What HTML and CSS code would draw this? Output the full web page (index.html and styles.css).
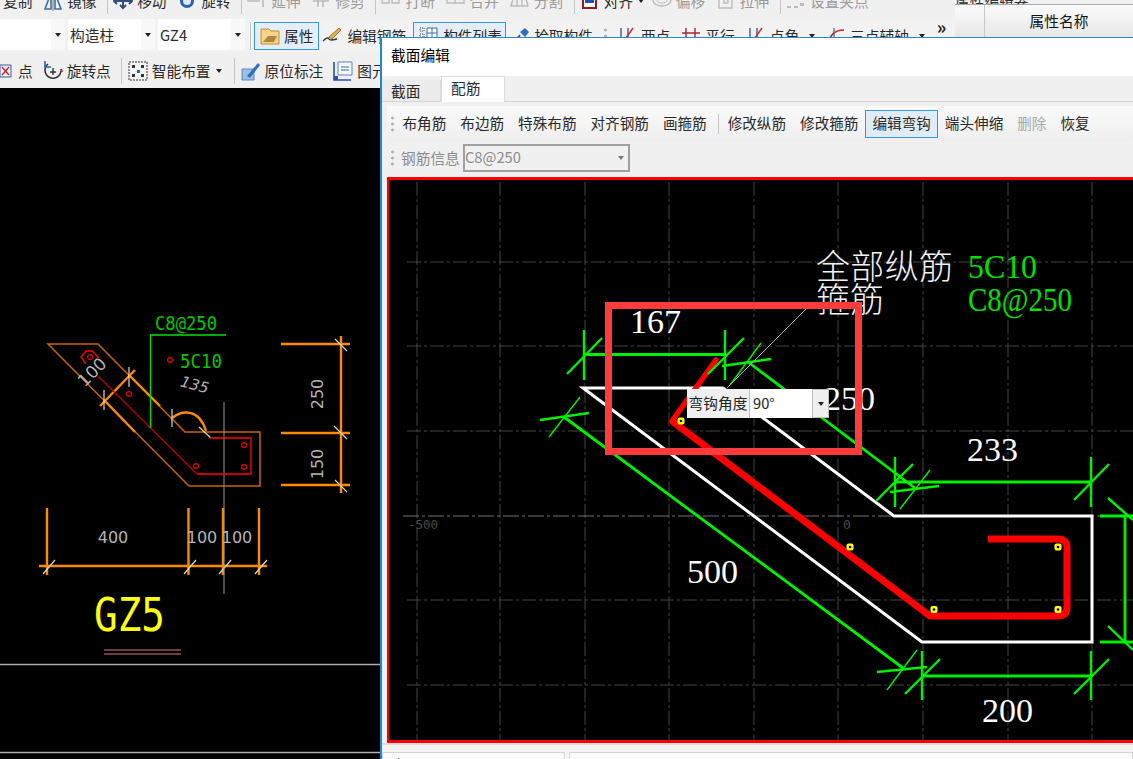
FILE: index.html
```html
<!DOCTYPE html>
<html lang="zh">
<head>
<meta charset="utf-8">
<title>截面编辑</title>
<link rel="stylesheet" href="styles.css">
</head>
<body>
<div class="stage">
  <div class="top">
    <div class="bars">
      <div class="row row0">
        <div class="tool"><span>复制</span></div>
        <div class="tool"><svg class="ic" viewBox="0 0 20 20"><path d="M8 2 2 18H8ZM12 2l6 16h-6Z" fill="none" stroke="#3f6f9f" stroke-width="1.6"/><path d="M10 0v20" stroke="#777"/></svg><span>镜像</span></div>
        <i class="sep"></i>
        <div class="tool"><svg class="ic" viewBox="0 -9 20 20"><path d="M10 -8V8M2 1h16M7 5l3 3 3-3M4 -2 1 1l3 3M16 -2l3 3-3 3" fill="none" stroke="#2f4f7f" stroke-width="2"/></svg><span>移动</span></div>
        <div class="tool"><svg class="ic" viewBox="0 -9 20 20"><circle cx="10" cy="1" r="5.500" fill="#dfe8f6" stroke="#2a62b8" stroke-width="3"/></svg><span>旋转</span></div>
        <i class="sep"></i>
        <div class="tool off"><svg class="ic" viewBox="0 -9 20 20"><path d="M0 1h13M0 -3h13M16 -6V7" fill="none" stroke="#bbb" stroke-width="1.6"/></svg><span>延伸</span></div>
        <div class="tool off"><svg class="ic" viewBox="0 -9 20 20"><path d="M2 1h16M7 -6V7M12 -6V7" fill="none" stroke="#bbb" stroke-width="1.6"/></svg><span>修剪</span></div>
        <i class="sep"></i>
        <div class="tool off"><svg class="ic" viewBox="0 -9 20 20"><path d="M1 -1h7v4H1ZM11 -1h7v4h-7Z" fill="none" stroke="#bbb" stroke-width="1.4"/></svg><span>打断</span></div>
        <div class="tool off"><svg class="ic" viewBox="0 -9 20 20"><path d="M1 -1h17v4H1ZM9 -1v4" fill="none" stroke="#bbb" stroke-width="1.4"/></svg><span>合并</span></div>
        <div class="tool off"><svg class="ic" viewBox="0 -9 20 20"><path d="M4 -5 1 6h17l-3-11M7 -5V6M12 -5V6" fill="none" stroke="#bbb" stroke-width="1.4"/></svg><span>分割</span></div>
        <i class="sep"></i>
        <div class="tool"><svg class="ic" viewBox="0 -9 20 20"><path d="M3 -6h13V8H3Z" fill="#fff" stroke="#8a1c2c" stroke-width="2"/><path d="M5 -2h9v5H5Z" fill="#1f4fb0"/></svg><span>对齐</span><b class="drop"></b></div>
        <div class="tool off"><svg class="ic" viewBox="0 -9 20 20"><ellipse cx="10" cy="0" rx="9" ry="6" fill="none" stroke="#bbb" stroke-width="1.4"/><ellipse cx="10" cy="0" rx="5" ry="3" fill="none" stroke="#bbb"/></svg><span>偏移</span></div>
        <div class="tool off"><svg class="ic" viewBox="0 -9 20 20"><path d="M3 -6V8h13V-6M8 -1h4v4H8Z" fill="none" stroke="#bbb" stroke-width="1.4"/></svg><span>拉伸</span></div>
        <i class="sep"></i>
        <div class="tool off"><svg class="ic" viewBox="0 -9 20 20"><path d="M1 7h4M8 7h4M16 -5l-5 5" fill="none" stroke="#aaa" stroke-width="1.6"/><path d="M14 3h4v3h-4Z" fill="#bbb"/></svg><span>设置夹点</span></div>
      </div>
      <div class="row row1">
        <div class="combo combo-a"><span></span><b class="arrow"></b></div>
        <div class="combo combo-b"><span>构造柱</span><b class="arrow"></b></div>
        <div class="combo combo-b"><span>GZ4</span><b class="arrow"></b></div>
        <i class="sep sep-tall"></i>
        <div class="tool btn-on"><svg class="ic" viewBox="0 0 20 20"><path d="M1 3h8l2 2h8v13H1Z" fill="#f6d58a" stroke="#c98a2a"/><path d="M3 16l5-6h9l-3 6Z" fill="#a88a3a"/></svg><span>属性</span></div>
        <div class="tool t-edit"><svg class="ic" viewBox="0 0 20 20"><path d="M1 15c3-3 5-4 6-2s4 1 8 0" fill="none" stroke="#333" stroke-width="1.4"/><path d="M7 11 17 2l2 2-9 9Z" fill="#e9b04a" stroke="#8a5a1a" stroke-width=".8"/></svg><span>编辑钢筋</span></div>
        <div class="tool btn-on t-list"><svg class="ic" viewBox="0 0 20 20"><path d="M1 2h4v3H1ZM1 8h4v3H1ZM1 14h4v3H1Z" fill="#fff" stroke="#333" stroke-dasharray="1 1"/><path d="M8 2h10v15H8ZM8 7h10M8 12h10M13 2v15" fill="#fff" stroke="#3a6ea5"/></svg><span>构件列表</span></div>
        <div class="tool t-pick"><svg class="ic" viewBox="0 0 20 20"><path d="M14 2l4 4-4 5-5-5Z" fill="#2f6fc0"/><path d="M9 9l-6 8" stroke="#555" stroke-width="2"/></svg><span>拾取构件</span></div>
        <i class="grip grip-a"></i>
        <div class="tool t-axis"><svg class="ic" viewBox="0 0 20 20"><path d="M4 2v16M11 2v16M1 13h16" fill="none" stroke="#3a5f95" stroke-width="1.4"/><path d="M6 16 16 2" stroke="#d22" stroke-width="1.4"/></svg><span>两点</span></div>
        <div class="tool t-axis"><svg class="ic" viewBox="0 0 20 20"><path d="M5 2v16M14 2v16M1 7h18M1 12h18" fill="none" stroke="#a02a3a" stroke-width="1.4"/></svg><span>平行</span></div>
        <div class="tool t-axis"><svg class="ic" viewBox="0 0 20 20"><path d="M4 2v16M11 2v16M1 13h16" fill="none" stroke="#3a5f95" stroke-width="1.4"/><path d="M6 16 16 2" stroke="#d22" stroke-width="1.4"/></svg><span>点角</span><b class="drop drop-far"></b></div>
        <div class="tool t-axis"><svg class="ic" viewBox="0 0 20 20"><path d="M3 18C3 9 9 4 18 4" fill="none" stroke="#c22" stroke-width="1.6"/><path d="M1 13h12M8 2v16" fill="none" stroke="#3a5f95" stroke-width="1.2"/></svg><span>三点辅轴</span><b class="drop drop-far"></b></div>
        <span class="more">»</span>
      </div>
      <div class="row row2">
        <div class="tool t-first"><svg class="ic" viewBox="0 0 20 20"><path d="M6 4h11v12H6Z" fill="#eef" stroke="#3a5f95"/><path d="M8 6l7 8M15 6l-7 8" stroke="#c22" stroke-width="1.4"/></svg><span>点</span></div>
        <div class="tool"><svg class="ic" viewBox="0 0 20 20"><path d="M5 3a8 8 0 1 0 13 7" fill="none" stroke="#333" stroke-width="1.6"/><path d="M2 0v6h6" fill="none" stroke="#2a62b8" stroke-width="1.6"/><path d="M10 7v7M7 11h6" stroke="#333" stroke-width="1.4"/><path d="M18 8l1 3" stroke="#c22" stroke-width="2"/></svg><span>旋转点</span></div>
        <i class="sep sep-r"></i>
        <div class="tool"><svg class="ic" viewBox="0 0 20 20"><path d="M1 1h18v18H1Z" fill="#f4f4f4" stroke="#333" stroke-dasharray="2 1"/><path d="M4 4h3v3H4ZM13 4h3v3h-3ZM4 13h3v3H4ZM13 13h3v3h-3Z" fill="#333"/><path d="M9 9h3v3H9Z" fill="#2a62b8"/></svg><span>智能布置</span><b class="drop"></b></div>
        <i class="sep sep-r"></i>
        <div class="tool"><svg class="ic" viewBox="0 0 20 20"><path d="M1 8h12v11H1Z" fill="#9cc0e8" stroke="#5a86b8"/><path d="M6 15 17 2l2 2L9 17Z" fill="#2f6fc0"/></svg><span>原位标注</span></div>
        <div class="tool"><svg class="ic" viewBox="0 0 20 20"><path d="M5 1h14v13H5Z" fill="#f4f8ff" stroke="#5a86b8"/><path d="M8 6h8M8 9h8" stroke="#3a6ea5"/><path d="M1 1v18h17" fill="none" stroke="#2a52a8" stroke-width="1.6"/><path d="M1 15h4v4H1Z" fill="#2a52a8"/></svg><span>图元</span></div>
      </div>
    </div>
    <div class="prop">
      <div class="prop-title">属性编辑器</div>
      <div class="prop-head"><div class="prop-idx"></div><div class="prop-name">属性名称</div></div>
    </div>
  </div>

  <div class="cad">
    <svg class="cad-svg" viewBox="0 88 380 671">
      <path class="o-thin" d="M48 344H98L185 432H260V486H189Z"/>
      <path class="o-thick" d="M100 406 135 370M129 375 160 406M104 400 135 432M281 344H350M281 433H350M281 485H350M341 336V493M39 566H267M47 508V575M188.500 508V575M223 508V575M259 508V575"/>
      <path class="o-arc" d="M172 418C182 410 199 408 206 431"/>
      <path class="w-thin" d="M104 390V410M129 367V387M172 409V427M199 427 211 438M335 339 347 351M334 426 347 439M335 480 347 492M43 574 55 560M184 574 196 560M219 574 231 560M255 574 267 560"/>
      <path class="w-line" d="M224 402V594"/>
      <path class="r-thin" d="M210 438H251V474H197"/>
      <path class="r-dark" d="M197 474 98 376"/>
      <path class="r-thin" d="M99 358 92 351H86L81 357 86 364"/>
      <g class="r-dots">
        <circle cx="90" cy="357" r="2.400"/><circle cx="129" cy="394" r="2.400"/><circle cx="170" cy="360" r="2.400"/><circle cx="196" cy="466" r="2.400"/><circle cx="244" cy="445" r="2.400"/><circle cx="244" cy="467" r="2.400"/>
      </g>
      <path class="g-thin" d="M150.500 428V335H226"/>
      <text class="t-green" x="155" y="330" textLength="62" lengthAdjust="spacingAndGlyphs">C8@250</text>
      <text class="t-green" x="180" y="368" textLength="42" lengthAdjust="spacingAndGlyphs">5C10</text>
      <text class="t-gray t-it" x="195" y="390" text-anchor="middle" transform="rotate(15 195 384)">135</text>
      <text class="t-gray t-big" x="92" y="378" text-anchor="middle" transform="rotate(-45 92 372)">100</text>
      <text class="t-gray" x="317" y="394" text-anchor="middle" dominant-baseline="central" transform="rotate(-90 317 394)">250</text>
      <text class="t-gray" x="317" y="464" text-anchor="middle" dominant-baseline="central" transform="rotate(-90 317 464)">150</text>
      <text class="t-gray" x="113" y="543" text-anchor="middle">400</text>
      <text class="t-gray" x="202" y="543" text-anchor="middle">100</text>
      <text class="t-gray" x="237" y="543" text-anchor="middle">100</text>
      <text class="t-yellow" x="94" y="631" textLength="71" lengthAdjust="spacingAndGlyphs">GZ5</text>
      <path class="pink" d="M104 650H181M104 654H181"/>
      <path class="w-rule" d="M0 664.500H380M0 752.500H380"/>
    </svg>
  </div>

  <div class="dialog">
    <div class="dlg-title">截面编辑</div>
    <div class="tabs">
      <div class="tab">截面</div>
      <div class="tab tab-on">配筋</div>
    </div>
    <div class="dlg-bar bar-a">
      <i class="grip"></i>
      <span class="cmd">布角筋</span>
      <span class="cmd">布边筋</span>
      <span class="cmd">特殊布筋</span>
      <span class="cmd">对齐钢筋</span>
      <span class="cmd">画箍筋</span>
      <i class="sep sep-cmd"></i>
      <span class="cmd">修改纵筋</span>
      <span class="cmd">修改箍筋</span>
      <span class="cmd cmd-on">编辑弯钩</span>
      <span class="cmd">端头伸缩</span>
      <span class="cmd cmd-off">删除</span>
      <span class="cmd">恢复</span>
    </div>
    <div class="dlg-bar bar-b">
      <i class="grip"></i>
      <span class="info-label">钢筋信息</span>
      <div class="info-combo"><span class="info-val">C8@250</span><b class="arrow arrow-gray"></b></div>
    </div>
    <div class="canvas">
      <svg class="canvas-svg" viewBox="389 180 744 560">
        <path class="grid" d="M417 182V740M500 182V740M585 182V740M669 182V740M754 182V740M838 182V740M923 182V740M1008 182V740M1092 182V740M407 262H1133M407 346H1133M407 431H1133M407 600H1133M407 685H1133"/>
        <path class="axis" d="M403 516H1133"/>
        <text class="t-axis-label" x="408" y="529" textLength="30" lengthAdjust="spacingAndGlyphs">-500</text>
        <text class="t-axis-label" x="843" y="529">0</text>
        <path class="outline" d="M583 388H723L894 516H1092V642H922Z"/>
        <path class="rebar" d="M988 539H1058Q1067 539 1067 548V607Q1067 616 1058 616H930L672 421"/>
        <path class="rebar-hook" d="M672 421 716 360"/>
        <path class="dim" d="M584 354.500H725M895 482H1091M922 676H1091M1125 516V642M1100 516H1133M1100 642H1133M564 417 903 668M748 362 915 488"/>
        <path class="dim-t" d="M584 330V380M725 330V380M567 374 602 338M708 374 744 338M895 457V507M1091 457V507M876 501 913 464M1074 500 1109 464M922 651V700M1091 651V700M905 694 940 659M1074 694 1109 659M1108 498 1133 520M1108 626 1133 650M540 420 589 413M722 366 771 359M877 672 927 667M890 492 939 486"/>
        <path class="dim-s" d="M549 437 580 397M730 385 761 343M887 690 917 650M900 509 930 470"/>
        <path class="leader" d="M727 388 807 308"/>
        <g class="nodes">
          <rect x="677.500" y="417.500" width="7" height="7" rx="2"/><rect x="846.500" y="543.500" width="7" height="7" rx="2"/><rect x="930.500" y="606" width="7" height="7" rx="2"/><rect x="1054.500" y="543.500" width="7" height="7" rx="2"/><rect x="1054.500" y="606" width="7" height="7" rx="2"/>
        </g>
        <g class="node-c">
          <circle cx="681" cy="421" r="1.300"/><circle cx="850" cy="547" r="1.300"/><circle cx="934" cy="609.500" r="1.300"/><circle cx="1058" cy="547" r="1.300"/><circle cx="1058" cy="609.500" r="1.300"/>
        </g>
        <text class="t-num" x="630" y="333">167</text>
        <text class="t-num" x="824" y="410">250</text>
        <text class="t-num" x="967" y="461">233</text>
        <text class="t-num" x="687" y="583">500</text>
        <text class="t-num" x="982" y="722">200</text>
        <text class="t-cn" x="816" y="279" textLength="137">全部纵筋</text>
        <text class="t-cn" x="816" y="312" textLength="68">箍筋</text>
        <text class="t-num t-gr" x="968" y="278" textLength="69" lengthAdjust="spacingAndGlyphs">5C10</text>
        <text class="t-num t-gr" x="968" y="311" textLength="104" lengthAdjust="spacingAndGlyphs">C8@250</text>
      </svg>
      <div class="hook-pop">
        <span class="hook-label">弯钩角度</span>
        <span class="hook-val">90°</span>
        <span class="hook-btn"><b class="arrow"></b></span>
      </div>
      <div class="callout"></div>
    </div>
    <div class="dlg-foot">
      <div class="pane pane-a">(</div>
      <div class="pane pane-b"></div>
    </div>
  </div>
</div>
</body>
</html>
```
FILE: styles.css
```css
html, body {
  margin: 0;
  padding: 0;
  height: 100%;
  overflow: hidden;
  background: #000;
}
.stage {
  position: relative;
  width: 1133px;
  height: 759px;
  display: flex;
  flex-direction: column;
  overflow: hidden;
  font-family: "Noto Sans CJK SC", "Noto Sans", sans-serif;
  font-size: 14.7px;
  color: #2a2a2a;
}
.top {
  display: flex;
  height: 88px;
  flex: none;
  background: #f0f0f0;
}
.bars {
  width: 955px;
  flex: none;
}
.row {
  display: flex;
  white-space: nowrap;
  overflow: hidden;
}
.row0 {
  height: 19px;
  padding-left: 3px;
  align-items: flex-start;
}
.row0 .tool {
  margin-top: -9px;
  margin-right: 10.700px;
}
.row1 {
  height: 33px;
  align-items: center;
  background: #f2f2f2;
}
.row2 {
  height: 36px;
  align-items: center;
  padding-top: 2px;
  box-sizing: border-box;
}
.tool {
  display: flex;
  align-items: center;
  gap: 4px;
  height: 20px;
  line-height: 20px;
  margin-right: 11px;
  flex: none;
}
.row2 .tool {
  margin-right: 10px;
}
.tool.off {
  color: #9a9a9a;
}
.ic {
  width: 20px;
  height: 20px;
  flex: none;
}
.sep {
  width: 1px;
  height: 20px;
  background: #c4c4c4;
  margin-right: 5px;
  margin-top: -6px;
  flex: none;
}
.row1 .sep-tall, .sep-r {
  margin-top: 0;
}
.sep-tall {
  height: 28px;
  margin-left: 2px;
  margin-right: 3px;
}
.sep-r {
  height: 26px;
  margin-right: 6px;
}
.drop {
  display: block;
  width: 0;
  height: 0;
  border-left: 3.5px solid transparent;
  border-right: 3.5px solid transparent;
  border-top: 4px solid #222;
  margin-left: 1px;
  margin-right: -3px;
}
.row2 .drop {
  margin-right: 2px;
}
.drop-far {
  margin-left: 6px;
  margin-right: 0;
}
.combo {
  display: flex;
  align-items: center;
  justify-content: space-between;
  height: 31px;
  background: #fff;
  margin-right: 3px;
  margin-top: -2px;
  box-sizing: border-box;
  flex: none;
}
.combo span {
  padding-left: 2px;
}
.combo-a {
  width: 65px;
}
.combo-b {
  width: 87px;
}
.arrow {
  display: flex;
  width: 14px;
  align-self: stretch;
  background: #f8f8f8;
}
.arrow::after {
  content: "";
  margin: auto;
  border-left: 3.5px solid transparent;
  border-right: 3.5px solid transparent;
  border-top: 4px solid #222;
}
.arrow-gray {
  background: transparent;
}
.arrow-gray::after {
  border-top-color: #777;
}
.btn-on {
  height: 28px;
  padding: 0 5px;
  margin: 0 3px 0 0;
  border: 1px solid #3a96dd;
  background: #e3eef9;
  box-sizing: border-box;
}
.row1 .t-edit {
  margin-right: 7px;
  gap: 5px;
}
.row1 .t-list {
  width: 93px;
  margin-right: 5px;
}
.row1 .t-pick {
  gap: 3px;
  margin-right: 11px;
}
.grip {
  display: block;
  width: 3px;
  height: 18px;
  flex: none;
  background: radial-gradient(circle, #b4b4b4 1.4px, transparent 1.6px) 0 0 / 3px 6px repeat-y;
}
.grip-a {
  margin-right: 10px;
}
.row1 .t-axis {
  margin-right: 11px;
  gap: 4px;
}
.more {
  font-size: 18px;
  line-height: 20px;
  margin-top: -20px;
  margin-left: 1px;
  color: #222;
  font-weight: 700;
}
.row2 .t-first {
  margin-left: -6px;
}
.prop {
  flex: 1;
  min-width: 0;
  display: flex;
  flex-direction: column;
}
.prop-title {
  height: 4px;
  overflow: hidden;
  line-height: 4px;
  color: #333;
  border-bottom: 1px solid #a8a8a8;
}
.prop-head {
  display: flex;
  height: 37px;
  background: linear-gradient(#fbfbfb, #e4e4e4);
  flex: none;
}
.prop-idx {
  width: 28px;
  height: 32px;
  margin-left: 1px;
  border-right: 1px solid #c8c8c8;
  border-bottom: 2px solid #d8bc90;
  flex: none;
}
.prop-name {
  flex: 1;
  text-align: center;
  color: #111;
  padding-top: 5px;
  line-height: 22px;
}
.cad {
  flex: 1;
  background: #000;
  min-height: 0;
}
.cad-svg {
  display: block;
  width: 380px;
  height: 671px;
}
.o-thin { fill: none; stroke: #c86400; stroke-width: 1.5; }
.o-thick { fill: none; stroke: #ff8a00; stroke-width: 2.4; }
.o-arc { fill: none; stroke: #ff8a00; stroke-width: 2.4; }
.w-thin { fill: none; stroke: #d8d8d8; stroke-width: 1.2; }
.w-line { stroke: #999; stroke-width: 1; }
.r-thin { fill: none; stroke: #f00; stroke-width: 1.4; }
.r-dark { stroke: #b80000; stroke-width: 1.4; }
.r-dots circle { fill: none; stroke: #e00; stroke-width: 1.2; }
.g-thin { fill: none; stroke: #00e000; stroke-width: 1.3; }
.t-green { font-family: "DejaVu Sans Mono", monospace; font-size: 20px; fill: #00c800; }
.t-gray { font-family: "DejaVu Sans", sans-serif; font-size: 16px; fill: #b4b4b4; }
.t-it { font-style: italic; font-size: 15px; }
.t-big { font-size: 17px; }
.t-yellow { font-family: "DejaVu Sans Mono", monospace; font-size: 46px; fill: #ffff14; }
.pink { fill: none; stroke: #d88080; stroke-width: 1.2; }
.w-rule { fill: none; stroke: #b0b0b0; stroke-width: 1.4; }

.dialog {
  position: absolute;
  left: 380px;
  top: 37px;
  right: 0;
  bottom: 0;
  display: flex;
  flex-direction: column;
  border-left: 2px solid #1e88d8;
  border-top: 1px solid #2a88d0;
  background: #f0f0f0;
}
.dlg-title {
  height: 38px;
  flex: none;
  background: #fff;
  color: #000;
  padding-left: 9px;
  line-height: 34px;
}
.tabs {
  height: 26px;
  flex: none;
  display: flex;
  align-items: flex-end;
  border-bottom: 1px solid #d4d4d4;
  box-sizing: border-box;
}
.tab {
  width: 59px;
  height: 21px;
  line-height: 21px;
  padding-left: 9px;
  box-sizing: border-box;
  background: #ececec;
  border-right: 1px solid #dcdcdc;
}
.tab-on {
  width: 64px;
  height: 26px;
  background: #fff;
  line-height: 22px;
  border: 1px solid #dcdcdc;
  border-bottom: 0;
  margin-bottom: -1px;
}
.dlg-bar {
  display: flex;
  align-items: center;
  flex: none;
  margin-left: 5px;
  white-space: nowrap;
}
.bar-a {
  height: 35px;
  margin-top: 4px;
  padding-left: 4px;
  background: linear-gradient(#fafafa, #eeeeee);
}
.bar-a .grip {
  margin-right: 1.500px;
}
.cmd {
  padding: 0 6px;
  height: 28px;
  line-height: 24px;
  font-size: 14.6px;
  box-sizing: border-box;
  border: 1px solid transparent;
}
.cmd-on {
  border: 1px solid #3a96dd;
  background: #dfecf8;
}
.cmd-off {
  color: #a8a8a8;
}
.sep-cmd {
  margin: 0 2px 0 4px;
  height: 20px;
}
.bar-b {
  height: 36px;
  width: 245px;
  padding-left: 4px;
  padding-bottom: 2px;
  box-sizing: border-box;
  color: #8c8c8c;
}
.info-label {
  margin-left: 7px;
  margin-right: 3px;
  margin-top: -1px;
  width: 59px;
  flex: none;
}
.info-combo {
  display: flex;
  align-items: center;
  justify-content: space-between;
  width: 167px;
  height: 28px;
  box-sizing: border-box;
  border: 2px solid #a0a0a0;
  background: #f0f0f0;
  flex: none;
}
.info-val {
  margin-top: -3px;
}
.canvas {
  position: relative;
  flex: 1;
  min-height: 0;
  margin-left: 5px;
  background: #000;
  border: solid #f00;
  border-width: 3px 0 3px 2px;
}
.canvas-svg {
  display: block;
  width: 744px;
  height: 560px;
}
.grid { fill: none; stroke: #444; stroke-width: 1; stroke-dasharray: 14 3 3 3; }
.axis { fill: none; stroke: #707070; stroke-width: 1.2; stroke-dasharray: 16 3 3 3; }
.t-axis-label { font-family: "DejaVu Sans Mono", monospace; font-size: 13px; fill: #4a4a4a; }
.outline { fill: none; stroke: #fff; stroke-width: 3; }
.rebar { fill: none; stroke: #f00; stroke-width: 7; stroke-linejoin: round; }
.rebar-hook { fill: none; stroke: #f00; stroke-width: 5.5; stroke-linecap: round; }
.dim { fill: none; stroke: #00f000; stroke-width: 2.8; }
.dim-t { fill: none; stroke: #00f000; stroke-width: 2.4; }
.dim-s { fill: none; stroke: #00f000; stroke-width: 1.4; }
.leader { stroke: #aaa; stroke-width: 1; }
.nodes rect { fill: #ffff00; }
.node-c circle { fill: #000; }
.t-num { font-family: "Liberation Serif", serif; font-size: 34px; fill: #fff; }
.t-gr { fill: #00e000; }
.t-cn { font-family: "Noto Sans CJK SC", sans-serif; font-size: 34px; font-weight: 300; fill: #f2f2f2; }
.hook-pop {
  position: absolute;
  left: 298px;
  top: 209px;
  display: flex;
  width: 142px;
  height: 29px;
  line-height: 28px;
  color: #222;
  background: #f0f0f0;
}
.hook-label {
  width: 62px;
  flex: none;
  text-align: center;
  white-space: nowrap;
}
.hook-val {
  width: 63px;
  flex: none;
  background: #fff;
  border-left: 1px solid #c0c0c0;
  box-sizing: border-box;
  padding-left: 3px;
}
.hook-btn {
  flex: 1;
  display: flex;
  border: 1px solid #c0c0c0;
  box-sizing: border-box;
}
.hook-btn .arrow {
  flex: 1;
  width: auto;
  background: #f0f0f0;
}
.callout {
  position: absolute;
  left: 216px;
  top: 122px;
  width: 257px;
  height: 153px;
  box-sizing: border-box;
  border: 7px solid #ff3b3b;
}
.dlg-foot {
  height: 16px;
  flex: none;
  display: flex;
  gap: 4px;
  padding-top: 7px;
  box-sizing: border-box;
  border-top: 2px solid #dcdcdc;
  background: #f4f4f4;
  overflow: hidden;
}
.pane {
  height: 30px;
  border: 1px solid #d4d4d4;
  background: #fbfbfb;
  box-sizing: border-box;
  line-height: 22px;
}
.pane-a {
  width: 183px;
  padding-left: 12px;
}
.pane-b {
  flex: 1;
}
```
